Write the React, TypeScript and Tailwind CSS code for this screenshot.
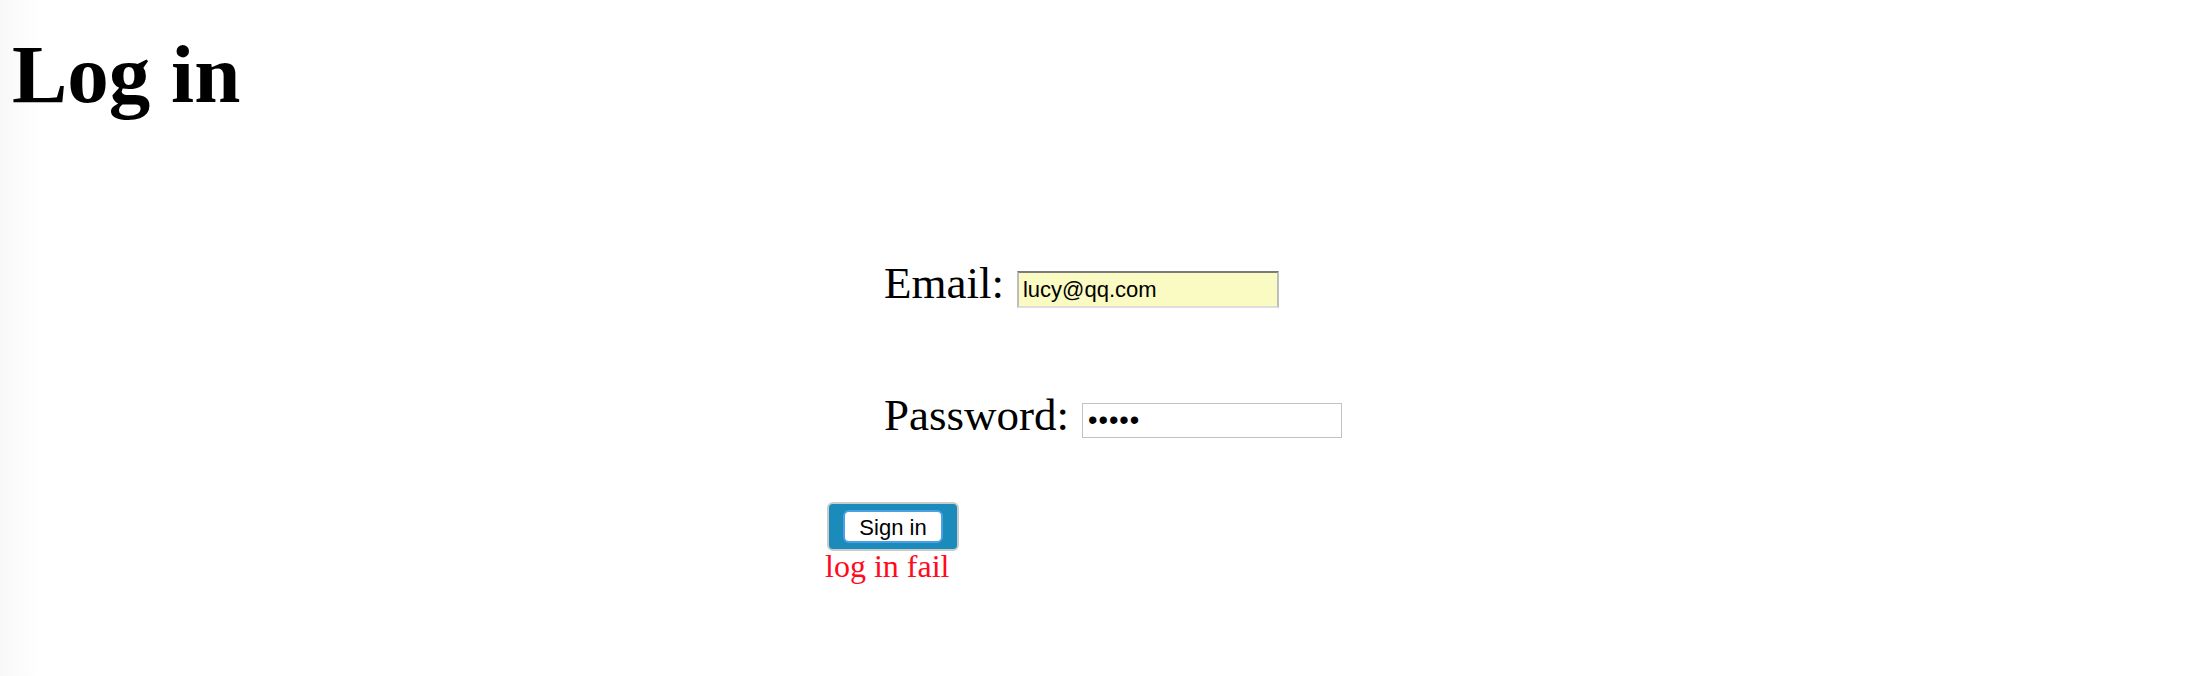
import React from "react";

export default function App() {
  return (
    <div className="min-h-[676px] w-full bg-[linear-gradient(to_right,#f8f8f8,#ffffff_40px)] text-black [font-family:'Liberation_Serif','Times_New_Roman',serif]">
      <div className="flex flex-col">
        <h1 className="mt-[32px] pl-[12px] text-[83px] font-bold leading-[84px]">Log in</h1>

        <div className="mt-[145px] flex items-start pl-[884px]">
          <label className="text-[45px] leading-[44px]">Email:</label>
          <input
            type="text"
            defaultValue="lucy@qq.com"
            className="ml-[13px] mt-[10px] h-[37px] w-[262px] border-2 border-t-[#7b7b7b] border-l-[#bdbdbd] border-r-[#bdbdbd] border-b-[#dedede] bg-[#fafac3] pl-[4px] text-[22px] text-black outline-none [font-family:'Liberation_Sans',Arial,sans-serif]"
          />
        </div>

        <div className="mt-[85px] flex items-start pl-[884px]">
          <label className="text-[45px] leading-[44px]">Password:</label>
          <input
            type="password"
            defaultValue="12345"
            className="ml-[13px] mt-[10px] h-[35px] w-[260px] border border-[#c2c2c2] bg-white pl-[5px] text-[27px] tracking-[1px] text-black outline-none [font-family:'Liberation_Sans',Arial,sans-serif]"
          />
        </div>

        <div className="mt-[64px] pl-[827px]">
          <div className="flex h-[49px] w-[132px] items-center justify-center rounded-[6px] border-2 border-[#cbcbcb] bg-[#1a8bbb]">
            <button
              type="button"
              className="h-[33px] w-[100px] rounded-[6px] border-2 border-[#4aa0e2] bg-white pt-[2px] text-[22px] leading-none text-black [font-family:'Liberation_Sans',Arial,sans-serif]"
            >
              Sign in
            </button>
          </div>
          <div className="mt-[-1px] ml-[-2px] text-[32px] leading-[32px] text-[#ff0a1e]">log in fail</div>
        </div>
      </div>
    </div>
  );
}
